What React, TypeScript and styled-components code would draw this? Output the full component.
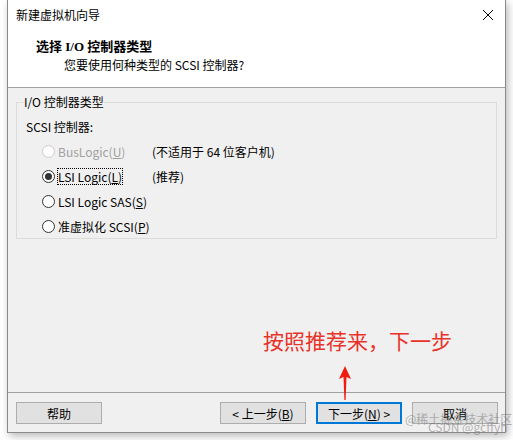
import React from "react";
import styled, { createGlobalStyle } from "styled-components";

const Global = createGlobalStyle`
  html, body { margin: 0; padding: 0; background: #ffffff; }
  body { width: 513px; height: 440px; overflow: hidden; font-family: "Noto Sans", "Noto Sans CJK SC", sans-serif; }
`;

const Page = styled.div`
  position: relative;
  width: 513px;
  height: 440px;
  padding-left: 7px;
  box-sizing: border-box;
`;

const Window = styled.div`
  width: 499px;
  height: 433px;
  box-sizing: border-box;
  border: 1px solid #8a8a8a;
  border-top: none;
  background: #f0f0f0;
  display: flex;
  flex-direction: column;
  box-shadow: 2px 3px 8px rgba(0, 0, 0, 0.28);
  font-size: 12px;
  color: #000;
`;

const TitleBar = styled.div`
  height: 30px;
  background: #fff;
  display: flex;
  align-items: center;
  justify-content: space-between;
  padding: 0 8px 0 8px;
  line-height: 30px;
  font-family: "Noto Sans CJK SC", sans-serif;
  font-size: 12px;
`;

const Header = styled.div`
  height: 58px;
  box-sizing: border-box;
  background: #fff;
  border-bottom: 1px solid #a0a0a0;
  padding-top: 8px;
  display: flex;
  flex-direction: column;
  gap: 1px;
`;

const HeaderTitle = styled.div`
  padding-left: 28px;
  line-height: 17px;
  font-weight: bold;
  font-size: 13px;
  font-family: "Liberation Serif", "Noto Sans CJK SC", serif;
`;

const HeaderSub = styled.div`
  padding-left: 56px;
  line-height: 17px;
  font-family: "Noto Sans CJK SC", sans-serif;
`;

const Body = styled.div`
  flex: 1;
  padding: 6px 8px 0 8px;
`;

const Group = styled.fieldset`
  margin: 0;
  padding: 0 0 0 9px;
  border: 1px solid #dcdcdc;
  height: 145px;
  box-sizing: border-box;
`;

const Legend = styled.legend`
  padding: 0;
  margin-left: -2px;
  line-height: 16px;
  font-family: "Noto Sans CJK SC", sans-serif;
`;

const Label = styled.div`
  line-height: 16px;
  margin-top: 9px;
  margin-bottom: 4px;
  font-family: "Noto Sans CJK SC", sans-serif;
`;

const Row = styled.div`
  height: 25px;
  display: grid;
  grid-template-columns: 110px auto;
  align-items: center;
  padding-left: 16px;
`;

const RadioWrap = styled.div<{ $disabled?: boolean }>`
  display: flex;
  align-items: center;
  gap: 3px;
  color: ${(p) => (p.$disabled ? "#a0a0a0" : "#000")};
  font-family: "Noto Sans CJK SC", sans-serif;
`;

const Circle = styled.span<{ $disabled?: boolean; $checked?: boolean }>`
  width: 13px;
  height: 13px;
  box-sizing: border-box;
  border-radius: 50%;
  border: 1px solid ${(p) => (p.$disabled ? "#cccccc" : "#333333")};
  background: #fff;
  display: flex;
  align-items: center;
  justify-content: center;
  &::after {
    content: "";
    width: 7px;
    height: 7px;
    border-radius: 50%;
    background: #333;
    display: ${(p) => (p.$checked ? "block" : "none")};
  }
`;

const RadioText = styled.span<{ $focus?: boolean }>`
  line-height: 15px;
  outline: ${(p) => (p.$focus ? "1px dotted #000" : "none")};
  u { text-decoration: underline; }
`;

const Note = styled.span`
  font-family: "Noto Sans CJK SC", sans-serif;
`;

const Footer = styled.div`
  border-top: 1px solid #a0a0a0;
  padding: 9px 7px 8px 8px;
  display: flex;
  align-items: center;
`;

const Spacer = styled.div`
  flex: 1;
`;

const Button = styled.div<{ $primary?: boolean }>`
  width: 86px;
  height: 22px;
  box-sizing: border-box;
  border: ${(p) => (p.$primary ? "2px solid #0078d7" : "1px solid #adadad")};
  background: #e1e1e1;
  display: flex;
  align-items: center;
  justify-content: center;
  font-family: "Noto Sans CJK SC", sans-serif;
  font-size: 12px;
  & + & { margin-left: 10px; }
  u { text-decoration: underline; }
`;

const Annotation = styled.div`
  position: absolute;
  left: 263px;
  top: 326px;
  color: #e8332a;
  font-size: 21px;
  line-height: 28px;
  font-family: "Noto Sans CJK SC", sans-serif;
  white-space: nowrap;
`;

const Arrow = styled.svg`
  position: absolute;
  left: 337px;
  top: 365px;
`;

const Watermark = styled.div<{ $top: number; $left: number }>`
  position: absolute;
  left: ${(p) => p.$left}px;
  top: ${(p) => p.$top}px;
  color: rgba(120, 120, 120, 0.55);
  font-size: 12px;
  line-height: 14px;
  font-family: "Noto Sans CJK SC", sans-serif;
  white-space: nowrap;
`;

const Radio = ({
  label,
  disabled,
  checked,
  focus,
}: {
  label: React.ReactNode;
  disabled?: boolean;
  checked?: boolean;
  focus?: boolean;
}) => (
  <RadioWrap $disabled={disabled}>
    <Circle $disabled={disabled} $checked={checked} />
    <RadioText $focus={focus}>{label}</RadioText>
  </RadioWrap>
);

export default function App() {
  return (
    <Page>
      <Global />
      <Window>
        <TitleBar>
          <span>新建虚拟机向导</span>
          <svg width="12" height="12" viewBox="0 0 12 12" style={{ marginRight: 3 }}>
            <path d="M1 1 L11 11 M11 1 L1 11" stroke="#000" strokeWidth="1" fill="none" />
          </svg>
        </TitleBar>
        <Header>
          <HeaderTitle>选择 I/O 控制器类型</HeaderTitle>
          <HeaderSub>您要使用何种类型的 SCSI 控制器?</HeaderSub>
        </Header>
        <Body>
          <Group>
            <Legend>I/O 控制器类型</Legend>
            <Label>SCSI 控制器:</Label>
            <Row>
              <Radio disabled label={<>BusLogic(<u>U</u>)</>} />
              <Note>(不适用于 64 位客户机)</Note>
            </Row>
            <Row>
              <Radio checked focus label={<>LSI Logic(<u>L</u>)</>} />
              <Note>(推荐)</Note>
            </Row>
            <Row>
              <Radio label={<>LSI Logic SAS(<u>S</u>)</>} />
            </Row>
            <Row>
              <Radio label={<>准虚拟化 SCSI(<u>P</u>)</>} />
            </Row>
          </Group>
        </Body>
        <Footer>
          <Button>帮助</Button>
          <Spacer />
          <Button>&lt; 上一步(<u>B</u>)</Button>
          <Button $primary>下一步(<u>N</u>) &gt;</Button>
          <Button>取消</Button>
        </Footer>
      </Window>
      <Annotation>按照推荐来，下一步</Annotation>
      <Arrow width="16" height="36" viewBox="0 0 16 36">
        <path d="M8 1 L14 14 L9.5 12 L8.6 35 L7.4 35 L6.5 12 L2 14 Z" fill="#f01c10" />
      </Arrow>
      <Watermark $left={405} $top={412}>@稀土掘金技术社区</Watermark>
      <Watermark $left={428} $top={420}>CSDN @gcffyh</Watermark>
    </Page>
  );
}
